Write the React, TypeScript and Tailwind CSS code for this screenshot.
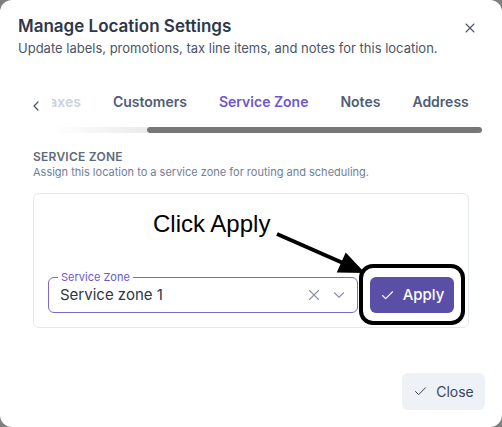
import { Check, ChevronDown, ChevronLeft, X } from "lucide-react";

const tabs = ["Taxes", "Customers", "Service Zone", "Notes", "Address"];

export default function App() {
  return (
    <div className="h-[427px] w-[502px] overflow-hidden bg-[#7f7f7f] font-['Inter',sans-serif]">
      <div className="relative flex h-full w-full flex-col rounded-[12px] bg-white">
        {/* header */}
        <div className="flex items-start justify-between pl-[18px] pr-[24px] pt-[14px]">
          <div>
            <h2 className="text-[17px] font-semibold leading-[24px] text-[#2d3748]">Manage Location Settings</h2>
            <p className="mt-[1px] text-[13px] leading-[18px] text-[#4a5568]">
              Update labels, promotions, tax line items, and notes for this location.
            </p>
          </div>
          <X className="mt-[6px] h-[16px] w-[16px] text-[#4a5568]" strokeWidth={1.6} />
        </div>

        {/* tabs */}
        <div className="mt-[33px] flex items-center pl-[28px] pr-[20px]">
          <ChevronLeft className="mt-[8px] h-[16px] w-[16px] shrink-0 text-[#4a5568]" strokeWidth={1.8} />
          <div className="ml-[8px] flex-1 overflow-hidden">
            <div className="-ml-[27px] flex whitespace-nowrap">
              {tabs.map((t) => (
                <div
                  key={t}
                  className={
                    t === "Service Zone"
                      ? "px-[16px] text-[14px] font-semibold leading-[24px] text-[#6e56cf]"
                      : t === "Taxes"
                        ? "px-[16px] text-[14px] font-semibold leading-[24px] text-[#ccd2dc]"
                        : "px-[16px] text-[14px] font-semibold leading-[24px] text-[#4f5d75]"
                  }
                >
                  {t}
                </div>
              ))}
            </div>
          </div>
        </div>
        <div className="ml-[52px] mr-[20px] mt-[13px] flex h-[6px]">
          <div className="w-[95px] bg-gradient-to-r from-white to-[#ebebeb]" />
          <div className="flex-1 rounded-full bg-[#777777]" />
        </div>

        {/* section */}
        <div className="px-[33px] pt-[16px]">
          <div className="text-[12px] font-semibold uppercase leading-[16px] tracking-[0.02em] text-[#5f6b7a]">Service Zone</div>
          <div className="text-[11px] leading-[15px] text-[#718096]">
            Assign this location to a service zone for routing and scheduling.
          </div>

          <div className="mt-[13px] rounded-[6px] border border-[#e4e8ef] px-[14px] pb-[14px] pt-[83px]">
            <div className="flex items-center gap-[12px]">
              <div className="relative flex h-[36px] flex-1 items-center rounded-[6px] border border-[#7c69c9] pl-[11px] pr-[9px]">
                <span className="absolute -top-[8px] left-[9px] bg-white px-[3px] text-[11px] leading-[14px] text-[#6e56cf]">
                  Service Zone
                </span>
                <span className="flex-1 text-[15px] text-[#2d3748]">Service zone 1</span>
                <X className="h-[18px] w-[18px] text-[#8a94a6]" strokeWidth={1.5} />
                <ChevronDown className="ml-[7px] h-[18px] w-[18px] text-[#8a94a6]" strokeWidth={1.5} />
              </div>
              <button className="flex h-[36px] w-[84px] items-center justify-center gap-[8px] rounded-[6px] bg-[#5b4ea6] text-[15px] font-medium text-white">
                <Check className="h-[15px] w-[15px]" strokeWidth={1.8} />
                Apply
              </button>
            </div>
          </div>
        </div>

        {/* footer */}
        <div className="mt-auto flex justify-end pb-[17px] pr-[17px]">
          <button className="flex h-[37px] w-[83px] items-center justify-center gap-[8px] rounded-[6px] bg-[#eef1f6] text-[14px] text-[#3b4558]">
            <Check className="h-[15px] w-[15px]" strokeWidth={1.6} />
            Close
          </button>
        </div>

        {/* annotation overlay */}
        <div className="pointer-events-none absolute left-[153px] top-[212px] font-['Liberation_Sans',Arial,sans-serif] text-[24px] leading-none text-black">
          Click Apply
        </div>
        <div className="pointer-events-none absolute left-[359px] top-[264px] h-[61px] w-[106px] rounded-[14px] border-[4px] border-black" />
        <svg className="pointer-events-none absolute inset-0" width="502" height="427">
          <line x1="277" y1="234" x2="343" y2="263" stroke="black" strokeWidth="4" />
          <polygon points="365,273 336.7,272.5 345.7,252.5" fill="black" />
        </svg>
      </div>
    </div>
  );
}
